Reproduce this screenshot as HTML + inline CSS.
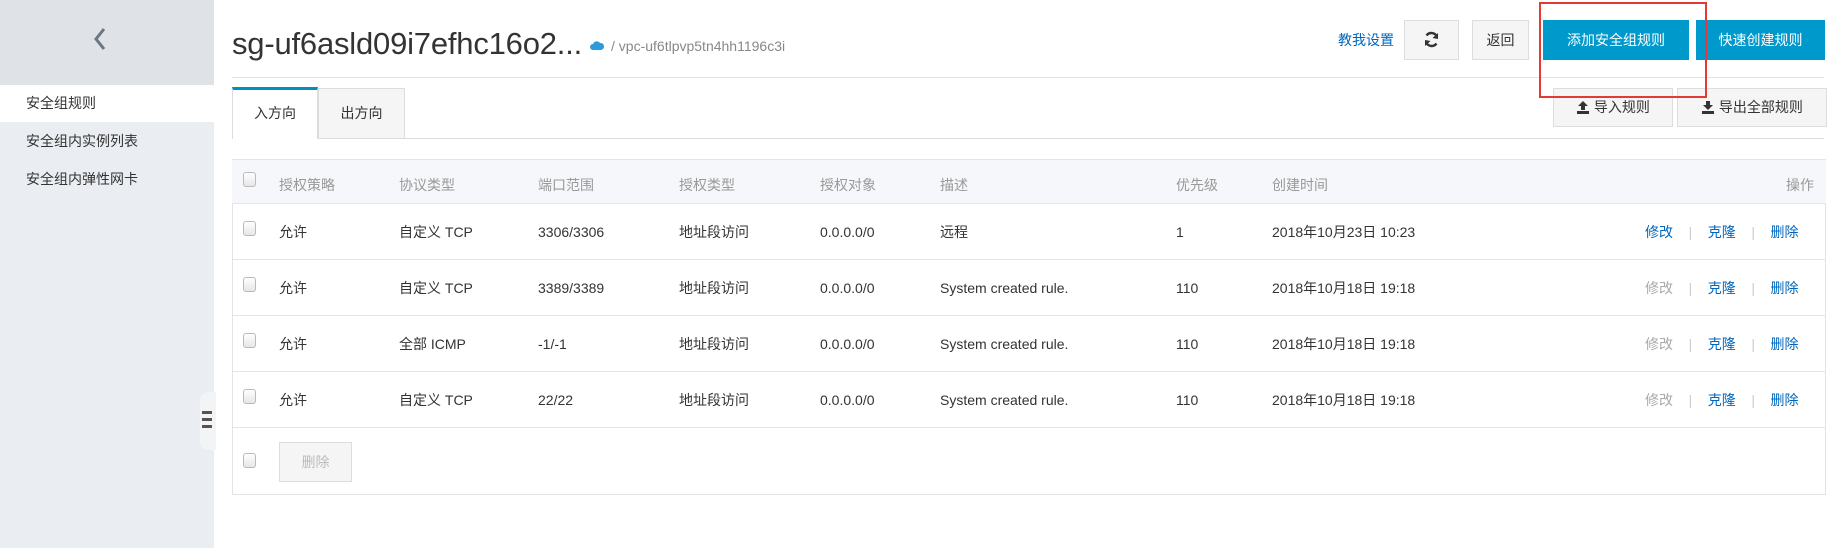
<!DOCTYPE html>
<html><head><meta charset="utf-8"><style>
*{margin:0;padding:0;box-sizing:border-box}
body{width:1845px;height:548px;background:#fff;font-family:"Liberation Sans","Noto Sans CJK SC",sans-serif;font-size:14px;color:#333;position:relative;overflow:hidden}
.abs{position:absolute;line-height:20px}
.side{left:0;top:0;width:214px;height:548px;background:#eaedf1}
.sidetop{left:0;top:0;width:214px;height:85px;background:#dfe3e8}
.act{left:0;top:85px;width:214px;height:37px;background:#fff}
.mi{left:26px;font-size:14px;color:#333}
.btn{border:1px solid #ddd;background:#f5f5f5;text-align:center;color:#333;font-size:14px}
.blue{background:#0099cc;color:#fff;text-align:center;font-size:14px}
.hd{color:#999;font-size:14px}
.row{left:232px;width:1594px;border-bottom:1px solid #e5e5e5}
.cb{width:13px;height:15px;border:1px solid #bbb;border-radius:3px;background:linear-gradient(#fff,#e6e6e6)}
.lnk{color:#0066bb}
.dis{color:#aaa}
.sep{color:#ccc}
</style></head><body>
<div class="abs side"></div>
<div class="abs sidetop"></div>
<svg class="abs" style="left:92px;top:27px" width="16" height="24" viewBox="0 0 16 24"><path d="M12 2 L4 12 L12 22" stroke="#6b7785" stroke-width="3" fill="none"/></svg>
<div class="abs act"></div>
<div class="abs mi" style="top:93px">安全组规则</div>
<div class="abs mi" style="top:131px">安全组内实例列表</div>
<div class="abs mi" style="top:169px">安全组内弹性网卡</div>
<div class="abs" style="left:200px;top:392px;width:16px;height:58px;background:#f3f4f6;border-radius:8px 0 0 8px"></div>
<div class="abs" style="left:202px;top:411px;width:10px;height:3px;background:#555"></div>
<div class="abs" style="left:202px;top:418px;width:10px;height:3px;background:#555"></div>
<div class="abs" style="left:202px;top:425px;width:10px;height:3px;background:#555"></div>

<div class="abs" style="left:232px;top:26px;font-size:31px;line-height:36px;color:#333;letter-spacing:-0.2px">sg-uf6asld09i7efhc16o2...</div>
<svg class="abs" style="left:590px;top:39px" width="14" height="12" viewBox="0 0 14 12"><path d="M3 11 A3 3 0 0 1 3 5 A4 4 0 0 1 10 4 A3.5 3.5 0 0 1 11 11 Z" fill="#2e9bd6"/></svg>
<div class="abs" style="left:611px;top:36px;font-size:14px;color:#888">/ vpc-uf6tlpvp5tn4hh1196c3i</div>
<div class="abs" style="left:232px;top:77px;width:1592px;height:1px;background:#e3e3e3"></div>

<div class="abs" style="left:1338px;top:30px;color:#0066bb;font-size:14px">教我设置</div>
<div class="abs btn" style="left:1404px;top:20px;width:55px;height:40px"></div>
<svg class="abs" style="left:1423px;top:31px" width="17" height="17" viewBox="0 0 17 17"><path d="M14 6 A6 6 0 0 0 3.5 4.5 M3 11 A6 6 0 0 0 13.5 12.5" stroke="#333" stroke-width="2.4" fill="none"/><path d="M15 2 L15 8 L9.5 7 Z M2 15 L2 9 L7.5 10 Z" fill="#333"/></svg>
<div class="abs btn" style="left:1472px;top:20px;width:57px;height:40px;line-height:38px">返回</div>
<div class="abs blue" style="left:1543px;top:20px;width:146px;height:40px;line-height:40px">添加安全组规则</div>
<div class="abs blue" style="left:1696px;top:20px;width:129px;height:40px;line-height:40px">快速创建规则</div>

<div class="abs" style="left:232px;top:138px;width:1592px;height:1px;background:#ddd"></div>
<div class="abs" style="left:232px;top:87px;width:86px;height:52px;background:#fff;border-left:1px solid #ddd;border-right:1px solid #ddd;border-top:3px solid #0090c0;text-align:center;line-height:46px">入方向</div>
<div class="abs" style="left:318px;top:88px;width:87px;height:50px;background:#f5f5f5;border:1px solid #ddd;border-bottom:none;text-align:center;line-height:48px">出方向</div>

<div class="abs btn" style="left:1553px;top:88px;width:120px;height:39px;line-height:37px"><svg width="14" height="14" viewBox="0 0 14 14" style="vertical-align:-2px"><path d="M7 1 L12 6 H9 V10 H5 V6 H2 Z M1 11 H13 V14 H1 Z" fill="#333"/></svg> 导入规则</div>
<div class="abs btn" style="left:1677px;top:88px;width:150px;height:39px;line-height:37px"><svg width="14" height="14" viewBox="0 0 14 14" style="vertical-align:-2px"><path d="M5 1 H9 V5 H12 L7 10 L2 5 H5 Z M1 11 H13 V14 H1 Z" fill="#333"/></svg> 导出全部规则</div>
<div class="abs" style="left:1539px;top:2px;width:168px;height:96px;border:2px solid #e53935"></div>

<div class="abs" style="left:232px;top:159px;width:1594px;height:336px;border:1px solid #e3e3e3"></div>
<div class="abs row" style="top:159px;height:45px;background:#f5f7fa;border-top:1px solid #e3e3e3"></div>
<div class="abs cb" style="left:243px;top:172px"></div>
<div class="abs hd" style="left:279px;top:175px">授权策略</div>
<div class="abs hd" style="left:399px;top:175px">协议类型</div>
<div class="abs hd" style="left:538px;top:175px">端口范围</div>
<div class="abs hd" style="left:679px;top:175px">授权类型</div>
<div class="abs hd" style="left:820px;top:175px">授权对象</div>
<div class="abs hd" style="left:940px;top:175px">描述</div>
<div class="abs hd" style="left:1176px;top:175px">优先级</div>
<div class="abs hd" style="left:1272px;top:175px">创建时间</div>
<div class="abs hd" style="left:1786px;top:175px">操作</div>

<div class="abs row" style="top:204px;height:56px"></div>
<div class="abs row" style="top:260px;height:56px"></div>
<div class="abs row" style="top:316px;height:56px"></div>
<div class="abs row" style="top:372px;height:56px"></div>

<div class="abs cb" style="left:243px;top:221px"></div>
<div class="abs" style="left:279px;top:222px">允许</div><div class="abs" style="left:399px;top:222px">自定义 TCP</div><div class="abs" style="left:538px;top:222px">3306/3306</div><div class="abs" style="left:679px;top:222px">地址段访问</div><div class="abs" style="left:820px;top:222px">0.0.0.0/0</div><div class="abs" style="left:940px;top:222px">远程</div><div class="abs" style="left:1176px;top:222px">1</div><div class="abs" style="left:1272px;top:222px">2018年10月23日 10:23</div>
<div class="abs" style="left:1645px;top:222px"><span class="lnk">修改</span>&nbsp;&nbsp;&nbsp;&nbsp;<span class="sep">|</span>&nbsp;&nbsp;&nbsp;&nbsp;<span class="lnk">克隆</span>&nbsp;&nbsp;&nbsp;&nbsp;<span class="sep">|</span>&nbsp;&nbsp;&nbsp;&nbsp;<span class="lnk">删除</span></div>

<div class="abs cb" style="left:243px;top:277px"></div>
<div class="abs" style="left:279px;top:278px">允许</div><div class="abs" style="left:399px;top:278px">自定义 TCP</div><div class="abs" style="left:538px;top:278px">3389/3389</div><div class="abs" style="left:679px;top:278px">地址段访问</div><div class="abs" style="left:820px;top:278px">0.0.0.0/0</div><div class="abs" style="left:940px;top:278px">System created rule.</div><div class="abs" style="left:1176px;top:278px">110</div><div class="abs" style="left:1272px;top:278px">2018年10月18日 19:18</div>
<div class="abs" style="left:1645px;top:278px"><span class="dis">修改</span>&nbsp;&nbsp;&nbsp;&nbsp;<span class="sep">|</span>&nbsp;&nbsp;&nbsp;&nbsp;<span class="lnk">克隆</span>&nbsp;&nbsp;&nbsp;&nbsp;<span class="sep">|</span>&nbsp;&nbsp;&nbsp;&nbsp;<span class="lnk">删除</span></div>

<div class="abs cb" style="left:243px;top:333px"></div>
<div class="abs" style="left:279px;top:334px">允许</div><div class="abs" style="left:399px;top:334px">全部 ICMP</div><div class="abs" style="left:538px;top:334px">-1/-1</div><div class="abs" style="left:679px;top:334px">地址段访问</div><div class="abs" style="left:820px;top:334px">0.0.0.0/0</div><div class="abs" style="left:940px;top:334px">System created rule.</div><div class="abs" style="left:1176px;top:334px">110</div><div class="abs" style="left:1272px;top:334px">2018年10月18日 19:18</div>
<div class="abs" style="left:1645px;top:334px"><span class="dis">修改</span>&nbsp;&nbsp;&nbsp;&nbsp;<span class="sep">|</span>&nbsp;&nbsp;&nbsp;&nbsp;<span class="lnk">克隆</span>&nbsp;&nbsp;&nbsp;&nbsp;<span class="sep">|</span>&nbsp;&nbsp;&nbsp;&nbsp;<span class="lnk">删除</span></div>

<div class="abs cb" style="left:243px;top:389px"></div>
<div class="abs" style="left:279px;top:390px">允许</div><div class="abs" style="left:399px;top:390px">自定义 TCP</div><div class="abs" style="left:538px;top:390px">22/22</div><div class="abs" style="left:679px;top:390px">地址段访问</div><div class="abs" style="left:820px;top:390px">0.0.0.0/0</div><div class="abs" style="left:940px;top:390px">System created rule.</div><div class="abs" style="left:1176px;top:390px">110</div><div class="abs" style="left:1272px;top:390px">2018年10月18日 19:18</div>
<div class="abs" style="left:1645px;top:390px"><span class="dis">修改</span>&nbsp;&nbsp;&nbsp;&nbsp;<span class="sep">|</span>&nbsp;&nbsp;&nbsp;&nbsp;<span class="lnk">克隆</span>&nbsp;&nbsp;&nbsp;&nbsp;<span class="sep">|</span>&nbsp;&nbsp;&nbsp;&nbsp;<span class="lnk">删除</span></div>

<div class="abs cb" style="left:243px;top:453px"></div>
<div class="abs" style="left:279px;top:442px;width:73px;height:40px;border:1px solid #ddd;background:#f5f5f5;color:#bbb;text-align:center;line-height:38px">删除</div>
</body></html>
